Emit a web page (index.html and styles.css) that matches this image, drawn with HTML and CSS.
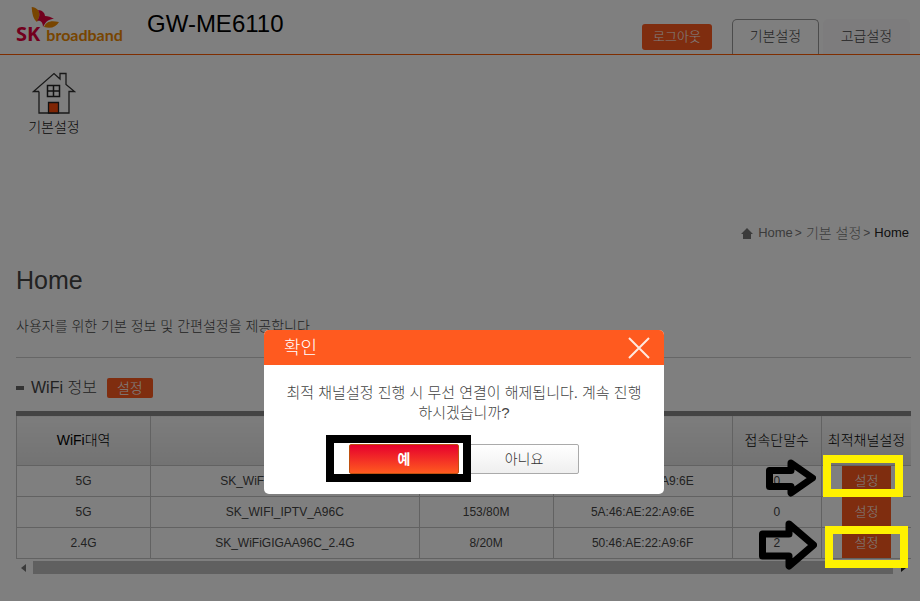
FILE: index.html
```html
<!DOCTYPE html>
<html lang="ko">
<head>
<meta charset="utf-8">
<meta name="viewport" content="width=device-width, initial-scale=1">
<title>GW-ME6110</title>
<link rel="stylesheet" href="styles.css">
</head>
<body>
<header class="header">
  <a class="logo" href="#">
    <svg class="butterfly" viewBox="0 0 28 22" aria-hidden="true">
      <path fill="#f08a00" d="M0.700 0C3 0 5 1 7 3C9 6 9 9 6 15C2 12 1 6 0.700 0Z"/>
      <path fill="#e5003c" d="M7 3C11 3 14 6 14 9C17 9 20 10 23 12C18 12 15 14 12 20C12 16 10 13 6 14C9 10 9 6 7 3Z"/>
      <path fill="#f08a00" d="M13 20C15 15 19 13 28 15C25 20 20 22 13 20Z"/>
    </svg>
    <span class="logo-sk">SK</span><span class="logo-name">broadband</span>
  </a>
  <h1 class="model">GW-ME6110</h1>
  <button class="logout" type="button">로그아웃</button>
  <nav class="tabs">
    <a class="tab tab-active" href="#">기본설정</a>
    <a class="tab" href="#">고급설정</a>
  </nav>
</header>

<nav class="menu">
  <a class="menu-item" href="#">
    <svg class="house" viewBox="0 0 44 42" aria-hidden="true">
      <path fill="none" stroke="#333" stroke-width="1.3" d="M7 19.500H1.500L22 1.500L28 7V1.500H34V12.500L42.500 19.500H37V41H7V19.500"/>
      <path fill="none" stroke="#222" stroke-width="1.500" d="M15.500 13.500H27.500V24.500H15.500ZM21.500 13.500V24.500M15.500 19H27.500"/>
      <path fill="#ff4a08" stroke="#222" stroke-width="1.300" d="M16.500 41V30.500H26.500V41Z"/>
    </svg>
    <span>기본설정</span>
  </a>
</nav>

<main class="content">
  <nav class="crumbs" aria-label="위치">
    <svg class="crumb-icon" viewBox="0 0 12 11" aria-hidden="true"><path fill="#777" d="M6 0L12 6H10V11H2V6H0Z"/></svg>
    <a href="#">Home</a><span class="sep">&gt;</span><a class="crumb-ko" href="#">기본 설정</a><span class="sep">&gt;</span><a class="current" href="#">Home</a>
  </nav>
  <h2 class="title">Home</h2>
  <p class="desc">사용자를 위한 기본 정보 및 간편설정을 제공합니다</p>
  <div class="section-head">
    <h3>WiFi 정보</h3>
    <button class="small-btn" type="button">설정</button>
  </div>

  <div class="table-area">
    <table class="wifi">
      <colgroup><col class="c-band"><col class="c-ssid"><col class="c-channel"><col class="c-mac"><col class="c-count"><col class="c-best"></colgroup>
      <thead>
        <tr><th>WiFi대역</th><th>SSID</th><th>채널</th><th>MAC</th><th>접속단말수</th><th>최적채널설정</th></tr>
      </thead>
      <tbody>
        <tr><td>5G</td><td>SK_WiFiGIGAA96C_5G</td><td>153/80M</td><td>50:46:AE:22:A9:6E</td><td>0</td><td><button class="row-btn" type="button">설정</button></td></tr>
        <tr><td>5G</td><td>SK_WIFI_IPTV_A96C</td><td>153/80M</td><td>5A:46:AE:22:A9:6E</td><td>0</td><td><button class="row-btn" type="button">설정</button></td></tr>
        <tr><td>2.4G</td><td>SK_WiFiGIGAA96C_2.4G</td><td>8/20M</td><td>50:46:AE:22:A9:6F</td><td>2</td><td><button class="row-btn" type="button">설정</button></td></tr>
      </tbody>
    </table>
    <div class="scroll" aria-hidden="true">
      <span class="arrow-left"></span><span class="thumb"></span><span class="arrow-right"></span>
    </div>
    <span class="mark mark-first"></span>
    <span class="mark mark-last"></span>
    <svg class="pointer pointer-first" viewBox="0 0 50 38" aria-hidden="true"><path d="M3.500 11.500H25V4L46.500 19L25 34V27.500H3.500Z"/></svg>
    <svg class="pointer pointer-last" viewBox="0 0 58 50" aria-hidden="true"><path d="M3.500 14H30V4L54.500 25L30 46V36H3.500Z"/></svg>
  </div>
</main>

<div class="shade"></div>
<div class="dialog" role="dialog" aria-labelledby="dialog-title">
  <div class="dialog-head">
    <h2 id="dialog-title">확인</h2>
    <button class="close" type="button" aria-label="닫기">
      <svg viewBox="0 0 22 22" aria-hidden="true"><path fill="none" stroke="#ffe9df" stroke-width="2" d="M1 1L21 21M21 1L1 21"/></svg>
    </button>
  </div>
  <div class="dialog-body">
    <p>최적 채널설정 진행 시 무선 연결이 해제됩니다. 계속 진행하시겠습니까?</p>
    <div class="actions">
      <button class="yes" type="button">예</button>
      <button class="no" type="button">아니요</button>
      <span class="yes-mark"></span>
    </div>
  </div>
</div>
</body>
</html>
```
FILE: styles.css
```css
* { box-sizing: border-box; }

body {
  margin: 0;
  background: #fff;
  color: #444;
  font-family: "Liberation Sans", "Noto Sans CJK KR", sans-serif;
  font-size: 14px;
  font-weight: 300;
  line-height: 20px;
}

h1, h2, h3, p { margin: 0; font-weight: 300; }
a { color: inherit; text-decoration: none; }
button {
  border: 0;
  padding: 0;
  font: inherit;
  color: #fff;
  background: #ff5a1f;
}

.header {
  display: flex;
  align-items: flex-end;
  height: 55px;
  padding: 0 8px 0 16px;
  border-bottom: 1px solid #ff5a00;
}
.logo {
  position: relative;
  display: flex;
  align-items: baseline;
  gap: 6px;
  width: 131px;
  padding-bottom: 9px;
  font-family: "Noto Sans", sans-serif;
  font-weight: 700;
}
.butterfly { position: absolute; left: 15px; top: -17px; width: 28px; height: 22px; }
.logo-sk { color: #e5003c; font-size: 20px; }
.logo-name { color: #f08a00; font-family: Lato, sans-serif; font-size: 16px; font-weight: 700; }
.model { flex: 1; padding-bottom: 16px; color: #000; font-size: 24px; line-height: 28px; }
.logout {
  width: 70px;
  height: 26px;
  margin: 0 20px 4px 0;
  border-radius: 3px;
  font-size: 13px;
}
.tabs { display: flex; gap: 4px; }
.tab {
  width: 87px;
  height: 35px;
  padding-top: 6px;
  border: 1px solid #fbf9fa;
  border-bottom: 0;
  border-radius: 5px 5px 0 0;
  background: #fbf9fa;
  text-align: center;
}
.tab-active { border-color: #999; background: #fff; }
.tabs { margin-right: 2px; }

.menu { padding: 17px 0 0 24px; }
.menu-item {
  display: flex;
  flex-direction: column;
  align-items: center;
  gap: 3px;
  width: 60px;
  color: #111;
}
.house { width: 44px; height: 42px; }

.content { padding: 86px 9px 0 16px; }
.crumbs {
  display: flex;
  justify-content: flex-end;
  align-items: center;
  padding-right: 2px;
  color: #777;
  font-size: 13px;
}
.crumb-icon { width: 12px; height: 11px; margin-right: 5px; }
.crumb-ko { font-size: 14px; }
.sep { margin: 0 4px 0 2px; font-size: 12px; }
.current { color: #222; }
.title { margin-top: 21px; font-size: 25px; line-height: 32px; }
.desc { padding: 20px 0 21px; border-bottom: 1px solid #ccc; }
.section-head { display: flex; align-items: center; gap: 10px; height: 20px; margin: 20px 0 13px; }
.section-head h3 { display: flex; align-items: center; gap: 7px; font-size: 16px; }
.section-head h3::before { content: ""; width: 8px; height: 4px; background: #666; }
.small-btn { width: 46px; height: 20px; border-radius: 2px; }

.table-area { position: relative; }
.wifi {
  width: 100%;
  border-collapse: collapse;
  border-top: 5px solid #888;
  table-layout: fixed;
  text-align: center;
  font-size: 12px;
}
.c-band { width: 15%; }
.c-ssid { width: 30%; }
.c-channel { width: 15%; }
.c-mac { width: 20%; }
.c-count { width: 10%; }
.c-best { width: 10%; }
.wifi th, .wifi td { padding: 0; border: 1px solid #c4c4c4; }
.wifi th:last-child, .wifi td:last-child { border-right: 0; }
.wifi th {
  height: 52px;
  padding-bottom: 2px;
  background: linear-gradient(#fafafa, #e6e6e6);
  color: #000;
  font-size: 14px;
  font-weight: 300;
  white-space: nowrap;
}
.wifi td { height: 31px; }
.row-btn { display: block; width: 49px; height: 30px; margin: 0 auto; font-size: 13px; }

.scroll { display: flex; align-items: center; justify-content: space-between; height: 13px; margin-top: 2px; padding: 0 5px; }
.thumb { flex: 1; height: 13px; margin: 0 8px 0 7px; background: #c0c0c0; }
.arrow-left, .arrow-right { border: 4px solid transparent; border-width: 4px 5px 4px 0; border-right-color: #777; }
.arrow-right { border-width: 4px 0 4px 5px; border-left-color: #222; }

.shade { position: fixed; inset: 0; z-index: 10; background: rgba(0, 0, 0, 0.5); }

.mark { position: absolute; z-index: 20; border: 8px solid #fff200; }
.mark-first { right: 8px; top: 44px; width: 80px; height: 42px; }
.mark-last { right: 3px; top: 115px; width: 83px; height: 42px; }
.pointer { position: absolute; z-index: 20; fill: none; stroke: #000; stroke-width: 7; stroke-linejoin: round; }
.pointer-first { right: 95px; top: 48px; width: 50px; height: 38px; }
.pointer-last { right: 94px; top: 109px; width: 58px; height: 50px; }

.dialog {
  position: absolute;
  z-index: 30;
  left: calc(50% - 196px);
  top: 330px;
  width: 400px;
  border-radius: 5px;
  overflow: hidden;
  background: #fff;
}
.dialog-head {
  display: flex;
  align-items: center;
  justify-content: space-between;
  height: 35px;
  padding: 0 14px 0 20px;
  background: #ff5a1f;
  color: #fff;
}
.dialog-head h2 { font-size: 18px; }
.close { width: 22px; height: 22px; background: none; }
.close svg { display: block; }
.dialog-body { padding: 18px 20px 20px; text-align: center; }
.dialog-body p { font-size: 15px; word-break: break-all; }
.actions { position: relative; display: flex; justify-content: center; gap: 10px; margin-top: 21px; }
.actions button { width: 110px; height: 30px; border-radius: 2px; }
.actions .yes { border: 1px solid #c05010; background: linear-gradient(#e6002d, #ff5a1f); font-weight: 700; }
.actions .no { border: 1px solid #aaa; background: linear-gradient(#fff, #efefef); color: #333; }
.yes-mark { position: absolute; left: 42px; top: -9px; width: 145px; height: 47px; border: 8px solid #000; }
```
